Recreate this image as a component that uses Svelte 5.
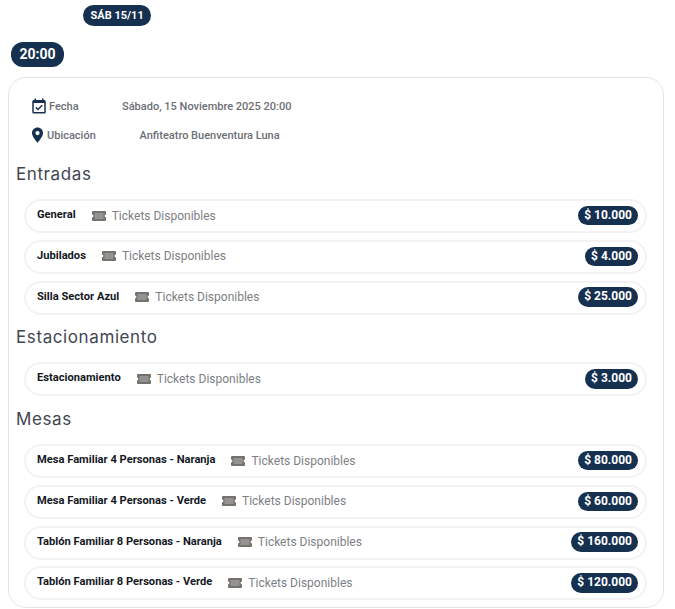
<script>
const groups = [
	{ title: "Entradas", items: [
		{ name: "General", price: "10.000" },
		{ name: "Jubilados", price: "4.000" },
		{ name: "Silla Sector Azul", price: "25.000" }
	]},
	{ title: "Estacionamiento", items: [
		{ name: "Estacionamiento", price: "3.000" }
	]},
	{ title: "Mesas", items: [
		{ name: "Mesa Familiar 4 Personas - Naranja", price: "80.000" },
		{ name: "Mesa Familiar 4 Personas - Verde", price: "60.000" },
		{ name: "Tablón Familiar 8 Personas - Naranja", price: "160.000" },
		{ name: "Tablón Familiar 8 Personas - Verde", price: "120.000" }
	]}
];
</script>

<main>
	<div class="dates"><span class="pill day">SÁB 15/11</span></div>
	<div class="times"><span class="pill time">20:00</span></div>

	<section class="card">
		<div class="info">
			<div class="info-row">
				<svg class="ic" width="18" height="18" viewBox="0 0 24 24" fill="#16304f"><path d="M19 4h-1V2h-2v2H8V2H6v2H5a2 2 0 0 0-2 2v14a2 2 0 0 0 2 2h14a2 2 0 0 0 2-2V6a2 2 0 0 0-2-2zm0 16H5V8h14v12zM10.6 18l-3.5-3.5 1.4-1.4 2.1 2.1 4.9-4.9 1.4 1.4-6.3 6.3z"/></svg>
				<span class="lbl fecha">Fecha</span>
				<span class="val">Sábado, 15 Noviembre 2025 20:00</span>
			</div>
			<div class="info-row">
				<svg class="ic pin" width="17" height="18" viewBox="0 0 24 24" fill="#16304f"><path d="M12 1.5C7.6 1.5 4.2 5 4.2 9.3c0 5.6 7.8 13.6 7.8 13.6s7.8-8 7.8-13.6c0-4.3-3.4-7.8-7.8-7.8zm0 10.8a3 3 0 1 1 0-6 3 3 0 0 1 0 6z"/></svg>
				<span class="lbl ubic">Ubicación</span>
				<span class="val">Anfiteatro Buenventura Luna</span>
			</div>
		</div>

		{#each groups as group}
			<h2>{group.title}</h2>
			<div class="rows">
				{#each group.items as item}
					<div class="row">
						<span class="name">{item.name}</span>
						<svg class="ticket" width="14" height="10" viewBox="0 0 14 10"><path fill="#77716b" d="M1 0h12a1 1 0 0 1 1 1v2.6a1.4 1.4 0 0 0 0 2.8V9a1 1 0 0 1-1 1H1a1 1 0 0 1-1-1V6.4a1.4 1.4 0 0 0 0-2.8V1a1 1 0 0 1 1-1z"/><rect x="2.5" y="2" width="9" height="6" fill="#939393"/></svg>
						<span class="avail">Tickets Disponibles</span>
						<span class="pill price">$ {item.price}</span>
					</div>
				{/each}
			</div>
		{/each}
	</section>
</main>

<style>
:global(body) {
	background: #fff;
	font-family: Roboto, "Liberation Sans", sans-serif;
}

main {
	padding: 5px 11px 1px 8px;
}

.pill {
	display: inline-block;
	background: #16304f;
	color: #fff;
	font-weight: 700;
	white-space: nowrap;
}

.dates {
	display: flex;
	padding-left: 75px;
	height: 21px;
}

.day {
	font-size: 11px;
	line-height: 21px;
	padding: 0 7.5px;
	border-radius: 11px;
}

.times {
	display: flex;
	margin-top: 16px;
	padding-left: 3px;
	height: 25px;
}

.time {
	font-size: 14px;
	line-height: 25px;
	padding: 0 8.5px;
	border-radius: 12px;
}

.card {
	margin-top: 10px;
	border: 1px solid #e4e4e4;
	border-radius: 18px;
	padding: 18px 16px 7px 7px;
	height: 531px;
	box-sizing: border-box;
}

.info {
	display: flex;
	flex-direction: column;
	gap: 9px;
	font-size: 11px;
	font-weight: 500;
	color: #6c6f75;
	margin-bottom: 17px;
}

.info-row {
	display: flex;
	align-items: center;
	height: 20px;
	padding-left: 14px;
}

.ic { flex: none; }
.pin { margin-left: -1px; }

.lbl { margin-left: 1px; }
.fecha { width: 73px; }
.ubic { width: 92.5px; }

h2 {
	margin: 0;
	font-family: Inter, sans-serif;
	font-size: 17px;
	font-weight: 400;
	letter-spacing: 0.6px;
	line-height: 24px;
	color: #3f4652;
}

.rows {
	display: flex;
	flex-direction: column;
	gap: 6.75px;
	margin: 13px 0 10.75px 8px;
}

.row {
	display: flex;
	align-items: center;
	height: 34px;
	box-sizing: border-box;
	border: 2px solid #f3f3f3;
	border-radius: 17px;
	padding: 0 7px 0 11px;
}

.name {
	font-size: 11.15px;
	font-weight: 700;
	color: #14181f;
	margin-top: -3px;
}

.ticket {
	margin-left: 16px;
	margin-top: -1px;
	flex: none;
}

.avail {
	margin-left: 6px;
	margin-top: -1px;
	font-size: 12px;
	color: #7d7f85;
}

.price {
	margin-left: auto;
	margin-top: -1px;
	font-size: 12px;
	line-height: 19.5px;
	padding: 0 6px;
	border-radius: 10px;
}
</style>
